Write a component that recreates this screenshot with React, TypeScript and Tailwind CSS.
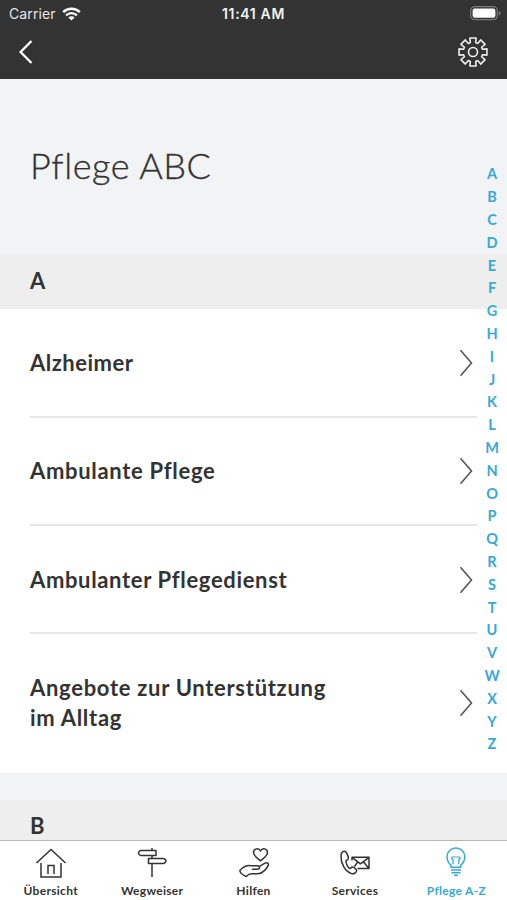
import type { ReactNode } from "react";

const LETTERS = "ABCDEFGHIJKLMNOPQRSTUVWXYZ".split("");

const gearPoints = Array.from({ length: 8 }, (_, i) => {
  const base = i * 45 - 90;
  return [
    [9.8, -16],
    [14.3, -12.5],
    [14.3, 12.5],
    [9.8, 16],
  ]
    .map(([r, a]) => {
      const t = ((base + a) * Math.PI) / 180;
      return `${(16 + r * Math.cos(t)).toFixed(2)},${(16 + r * Math.sin(t)).toFixed(2)}`;
    })
    .join(" ");
}).join(" ");

function StatusBar() {
  return (
    <div className="flex h-[27px] items-center justify-between pl-[9px] pr-[6px] font-[Inter,sans-serif] text-[14px] text-white">
      <div className="flex flex-1 items-center gap-[6px]">
        <span className="tracking-[0.100px] text-[#e6e6e6]">Carrier</span>
        <svg width="19" height="14" viewBox="0 0 19 14" fill="none" stroke="white" strokeWidth="2.4">
          <path d="M1.2 5.2a11.8 11.8 0 0 1 16.6 0" />
          <path d="M4.1 8.3a7.7 7.7 0 0 1 10.8 0" />
          <path d="M9.5 13.6 6.4 10.5a4.4 4.4 0 0 1 6.2 0z" fill="white" stroke="none" />
        </svg>
      </div>
      <span className="mr-[3px] whitespace-nowrap text-center font-semibold tracking-[0.650px] text-[#f2f2f2]">11:41 AM</span>
      <div className="flex flex-1 justify-end">
        <svg width="31" height="15" viewBox="0 0 31 15">
          <rect x=".7" y=".7" width="26.6" height="13" rx="4" fill="none" stroke="#777" strokeWidth="1.2" />
          <rect x="2.6" y="2.6" width="22.8" height="9.2" rx="2.2" fill="white" />
          <path d="M28.8 5v4.6c1.4-.6 1.9-1.3 1.9-2.3s-.5-1.8-1.9-2.3z" fill="#777" />
        </svg>
      </div>
    </div>
  );
}

function Header() {
  return (
    <header className="h-[79px] shrink-0 bg-[#333333]">
      <StatusBar />
      <div className="flex h-[50px] items-center justify-between px-[18px]">
        <svg width="16" height="24" viewBox="0 0 16 24" fill="none" stroke="white" strokeWidth="2.3">
          <path d="M13.500 1 2.600 12 13.500 23" />
        </svg>
        <svg width="32" height="32" viewBox="0 0 32 32" fill="none" stroke="#eeeeee" strokeWidth="1.6" strokeLinejoin="round">
          <polygon points={gearPoints} />
          <circle cx="16" cy="16" r="4.500" />
        </svg>
      </div>
    </header>
  );
}

function Row({ children, last = false }: { children: ReactNode; last?: boolean }) {
  return (
    <div
      className={
        last
          ? "mx-[30px] flex h-[139.100px] items-center justify-between pb-px"
          : "mx-[30px] flex h-[108.300px] items-center justify-between border-b-2 border-[#e6e6e6] pt-px"
      }
    >
      <div className="text-[22px] font-bold leading-[30px]">{children}</div>
      <svg className="mr-[4px]" width="14" height="28" viewBox="0 0 14 28" fill="none" stroke="#555555" strokeWidth="1.600">
        <path d="M1.500 1.200 12.500 14 1.500 26.800" />
      </svg>
    </div>
  );
}

function Tab({ label, active = false, children }: { label: ReactNode; active?: boolean; children: ReactNode }) {
  return (
    <div className={active ? "flex flex-1 flex-col items-center text-[#36a9d9]" : "flex flex-1 flex-col items-center text-[#333333]"}>
      <svg className="mt-[5px]" width="34" height="34" viewBox="0 0 34 34" fill="none" stroke="currentColor" strokeWidth="1.500" strokeLinejoin="round">
        {children}
      </svg>
      <span className="mt-[3px] whitespace-nowrap text-[12px] font-bold leading-4 tracking-[0.300px]">{label}</span>
    </div>
  );
}

export default function App() {
  return (
    <div className="relative flex h-[900px] w-[507px] flex-col overflow-hidden bg-[#f1f3f5] font-[Lato,sans-serif] text-[#333333]">
      <Header />
      <main className="min-h-0 flex-1 overflow-hidden">
        <div className="h-[176px] px-[30px] pt-[62px]">
          <h1 className="text-[36px] font-light leading-[48px] tracking-[0.550px] [-webkit-text-stroke:0.350px_#333333]">Pflege ABC</h1>
        </div>
        <h2 className="h-[54px] bg-[#eeeeee] px-[30px] text-[22px] font-bold leading-[52px]">A</h2>
        <div className="bg-white pt-[0.400px]">
          <Row><span className="tracking-[0.500px]">Alzheimer</span></Row>
          <Row><span className="tracking-[0.680px]">Ambulante Pflege</span></Row>
          <Row><span className="tracking-[0.650px]">Ambulanter Pflegedienst</span></Row>
          <Row last>
            <span className="tracking-[0.700px]">Angebote zur Unterstützung<br />im Alltag</span>
          </Row>
        </div>
        <h2 className="mt-[27px] h-[54px] bg-[#eeeeee] px-[30px] text-[22px] font-bold leading-[52px]">B</h2>
      </main>
      <nav className="flex h-[60px] shrink-0 border-t border-[#b8b8b8] bg-white">
        <Tab label="Übersicht">
          <path d="M2.500 17 17 3.500 31.500 17M7 17v14h20V17M14 28v-8.500h6V28" strokeLinejoin="miter" />
        </Tab>
        <Tab label="Wegweiser">
          <path d="M17 2v2.500M17 9.500v3M17 17v14" />
          <path d="M6 4.500h15v5H6c-1.500 0-2.500-1.500-2.500-2.500S4.500 4.500 6 4.500zM13.500 12.500h14.500c1.500 0 3 1.500 3 2.500s-1.500 2.500-3 2.500H13.500z" />
        </Tab>
        <Tab label="Hilfen">
          <path d="M23.500 14.800c-4-3.200-7-5.200-7-8.300 0-4.200 5.400-5 7-1.500 1.600-3.500 7-2.700 7 1.500 0 3.100-3 5.100-7 8.300z" />
          <path d="M15.500 23.200h5c2.800 0 2.800-3.400 0-3.400h-5c-2.500-.2-4-.7-6.500.2-2.700 1-4.700 2.400-6.200 4.600.5 2.400 3 4.500 6.400 5.900 1.600-1.700 3-2.700 5.500-2.700h6.200c2.500 0 4.300-1.200 5.900-2.700 2-1.800 3.600-3.500 4.500-5.700.7-2-1.300-3.200-3.300-2.200l-5.500 3.200" strokeLinecap="round" />
        </Tab>
        <Tab label="Services">
          <path d="M6.500 5.300c-1.800.2-3.300 1.800-3.500 4.500-.4 7.500 4 15.500 10.500 17.800 2.300.8 4.600-.7 5.200-3 .1-1.300-3.200-3.700-4.500-3.500-1.200.2-1.400 1.700-2.500 1.300-2-.9-3.800-4.500-3.700-7.300.1-1.300 2-.9 2.300-2.400.3-1.800-1.600-7.400-3.800-7.400z" />
          <path d="M19.500 22.500H31V11.300H14l8.500 6.500 8.500-6.500M14 11.300v3.200M25.500 16l5.500 6.500M16.500 20.500l3.200-4.500" />
        </Tab>
        <Tab active label="Pflege A-Z">
          <g transform="translate(-.5 -1.200)">
            <path d="M12.500 22.500v-2.200C9.500 18 8.500 15.600 8.500 12a8.900 8.900 0 0 1 17.800 0c0 3.600-1 6-4 8.300v2.200zM12.500 25.300h10M13 28h9M15.500 30.500h4" />
            <path d="M14.500 19.500v-5.200h-1.200v-2.100h8.200v2.100h-1.200v5.200" strokeWidth="1.200" />
          </g>
        </Tab>
      </nav>
      <aside className="absolute right-0 top-[163.400px] flex w-[30px] flex-col text-center text-[14.500px] font-bold leading-[22.800px] text-[#36a9d9]">
        {LETTERS.map((letter) => (
          <span key={letter}>{letter}</span>
        ))}
      </aside>
    </div>
  );
}
